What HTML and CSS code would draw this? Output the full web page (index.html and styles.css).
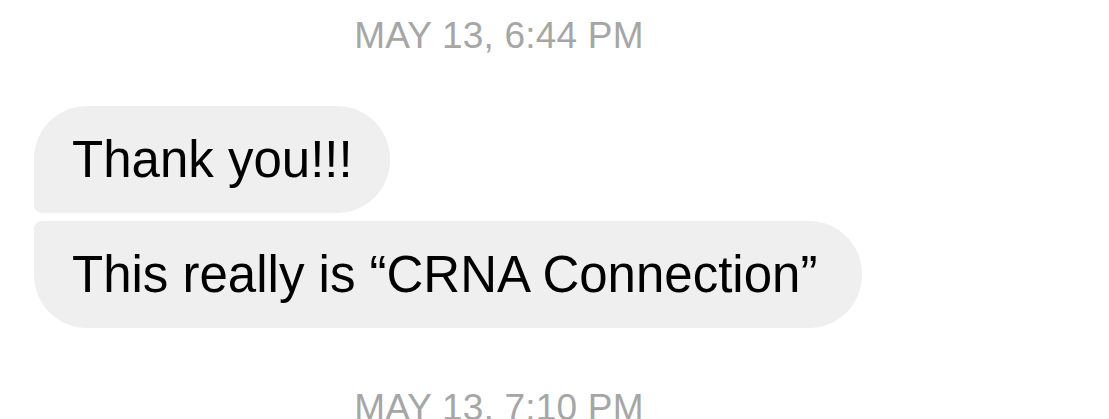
FILE: index.html
```html
<!DOCTYPE html>
<html>
<head>
<meta charset="utf-8">
<link rel="stylesheet" href="styles.css">
</head>
<body>
<div class="thread">
  <div class="stamp stamp-first">MAY 13, 6:44 PM</div>
  <div class="group">
    <div class="bubble bubble-first">Thank you!!!</div>
    <div class="bubble bubble-last">This really is “CRNA Connection”</div>
  </div>
  <div class="stamp stamp-next">MAY 13, 7:10 PM</div>
</div>
</body>
</html>
```
FILE: styles.css
```css
html, body {
  margin: 0;
  padding: 0;
  background: #ffffff;
  overflow: hidden;
}
.thread {
  width: 998px;
  display: flex;
  flex-direction: column;
  font-family: "Liberation Sans", Arial, sans-serif;
}
.stamp {
  text-align: center;
  color: #a6a6a6;
  font-size: 37px;
  line-height: 44px;
  height: 44px;
  letter-spacing: 0.2px;
}
.stamp-first {
  margin-top: 14px;
}
.stamp-next {
  margin-top: 58px;
}
.group {
  margin-top: 48px;
  padding-left: 34px;
  display: flex;
  flex-direction: column;
  align-items: flex-start;
  gap: 8px;
}
.bubble {
  background: #efefef;
  color: #000000;
  font-size: 51px;
  line-height: 107px;
  height: 107px;
  padding: 0 37px 0 38px;
  white-space: nowrap;
}
.bubble-first {
  border-radius: 53px 53px 53px 8px;
}
.bubble-last {
  padding-right: 45px;
  border-radius: 8px 53px 53px 53px;
}
```
